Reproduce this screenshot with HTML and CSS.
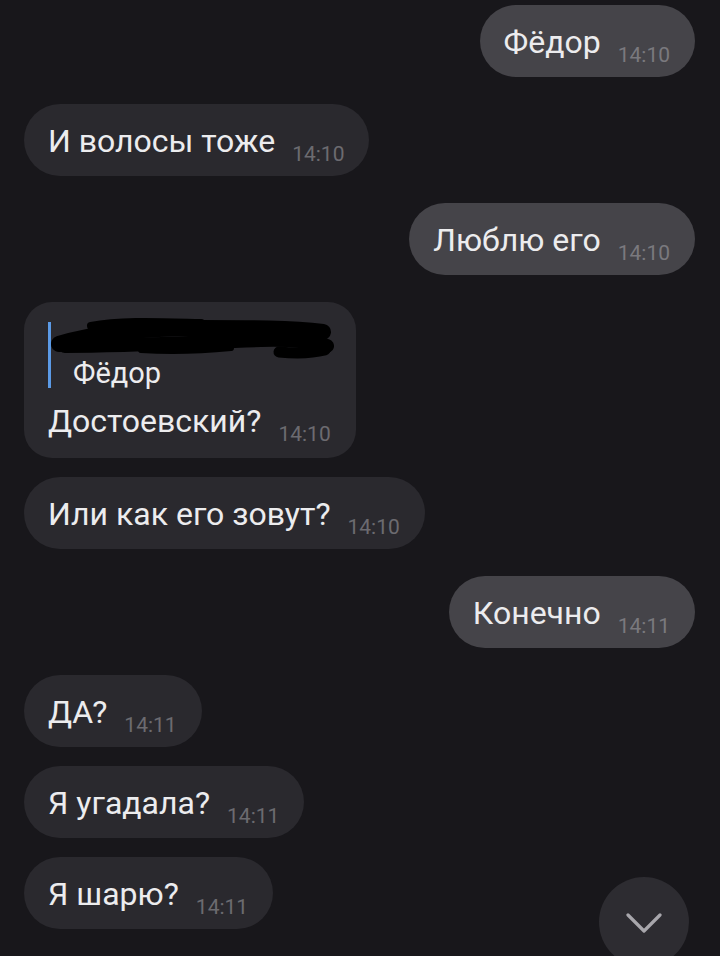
FILE: index.html
```html
<!DOCTYPE html>
<html lang="ru">
<head>
<meta charset="utf-8">
<link rel="stylesheet" href="styles.css">
</head>
<body>
<div class="chat">
  <div class="bubble out"><span class="text">Фёдор</span><span class="time">14:10</span></div>
  <div class="bubble in"><span class="text">И волосы тоже</span><span class="time">14:10</span></div>
  <div class="bubble out"><span class="text">Люблю его</span><span class="time">14:10</span></div>
  <div class="bubble in reply">
    <div class="quote">
      <div class="quote-name">&nbsp;</div>
      <div class="quote-text">Фёдор</div>
      <svg class="scribble" width="290" height="48" viewBox="0 0 290 48">
        <path d="M8 28 C40 18 90 12 150 12 C200 12 240 12 272 16" stroke="#000" stroke-width="16" stroke-linecap="round" fill="none"/>
        <path d="M14 30 C80 30 150 26 210 24 C240 23 262 26 276 30" stroke="#000" stroke-width="14" stroke-linecap="round" fill="none"/>
        <path d="M40 10 C70 4 110 6 150 7" stroke="#000" stroke-width="8" stroke-linecap="round" fill="none"/>
        <path d="M228 36 C250 38 266 36 274 34" stroke="#000" stroke-width="11" stroke-linecap="round" fill="none"/>
        <path d="M90 34 C120 36 150 35 180 32" stroke="#000" stroke-width="6" stroke-linecap="round" fill="none"/>
      </svg>
    </div>
    <div class="row"><span class="text">Достоевский?</span><span class="time">14:10</span></div>
  </div>
  <div class="bubble in same"><span class="text">Или как его зовут?</span><span class="time">14:10</span></div>
  <div class="bubble out"><span class="text">Конечно</span><span class="time">14:11</span></div>
  <div class="bubble in"><span class="text">ДА?</span><span class="time">14:11</span></div>
  <div class="bubble in same"><span class="text">Я угадала?</span><span class="time">14:11</span></div>
  <div class="bubble in same"><span class="text">Я шарю?</span><span class="time">14:11</span></div>
</div>
<div class="scroll-down">
  <svg width="36" height="20" viewBox="0 0 36 20"><path d="M2 2 L18 18 L34 2" stroke="#a8a7ac" stroke-width="3.2" stroke-linecap="round" stroke-linejoin="round" fill="none"/></svg>
</div>
</body>
</html>
```
FILE: styles.css
```css
html, body {
  margin: 0;
  padding: 0;
  background: #18171b;
  height: 956px;
  overflow: hidden;
}
body {
  font-family: Roboto, "Noto Sans", sans-serif;
  color: #ececee;
  position: relative;
}
.chat {
  display: flex;
  flex-direction: column;
  align-items: flex-start;
  padding: 5px 25px 0 24px;
}
.bubble {
  display: flex;
  align-items: flex-end;
  padding: 0 25px 0 24px;
  height: 72px;
  box-sizing: border-box;
  border-radius: 36px;
  margin-top: 27px;
  background: #2a292e;
}
.bubble:first-child { margin-top: 0; }
.bubble.same { margin-top: 19px; }
.bubble.out {
  align-self: flex-end;
  background: #454449;
}
.text {
  font-size: 32px;
  line-height: 36px;
  margin-bottom: 17px;
}
.time {
  font-size: 21px;
  line-height: 24px;
  color: #6c6b70;
  margin-left: 17px;
  margin-bottom: 10px;
}
.out .time { color: #7a797e; }
.bubble.reply {
  display: block;
  height: 156px;
  border-radius: 28px;
  padding-top: 20px;
}
.quote {
  position: relative;
  border-left: 3px solid #5b9ae6;
  padding-left: 22px;
  height: 66px;
}
.quote-name { height: 36px; }
.quote-text {
  font-size: 29px;
  line-height: 30px;
}
.scribble {
  position: absolute;
  left: 0;
  top: -6px;
}
.row {
  display: flex;
  align-items: flex-end;
  margin-top: 15px;
}
.row .text { margin-bottom: 0; }
.row .time { margin-bottom: -7px; }
.scroll-down {
  position: absolute;
  left: 599px;
  top: 877px;
  width: 90px;
  height: 90px;
  border-radius: 50%;
  background: #2d2c31;
  display: flex;
  align-items: center;
  justify-content: center;
}
.scroll-down svg { margin-top: 2px; }
```
